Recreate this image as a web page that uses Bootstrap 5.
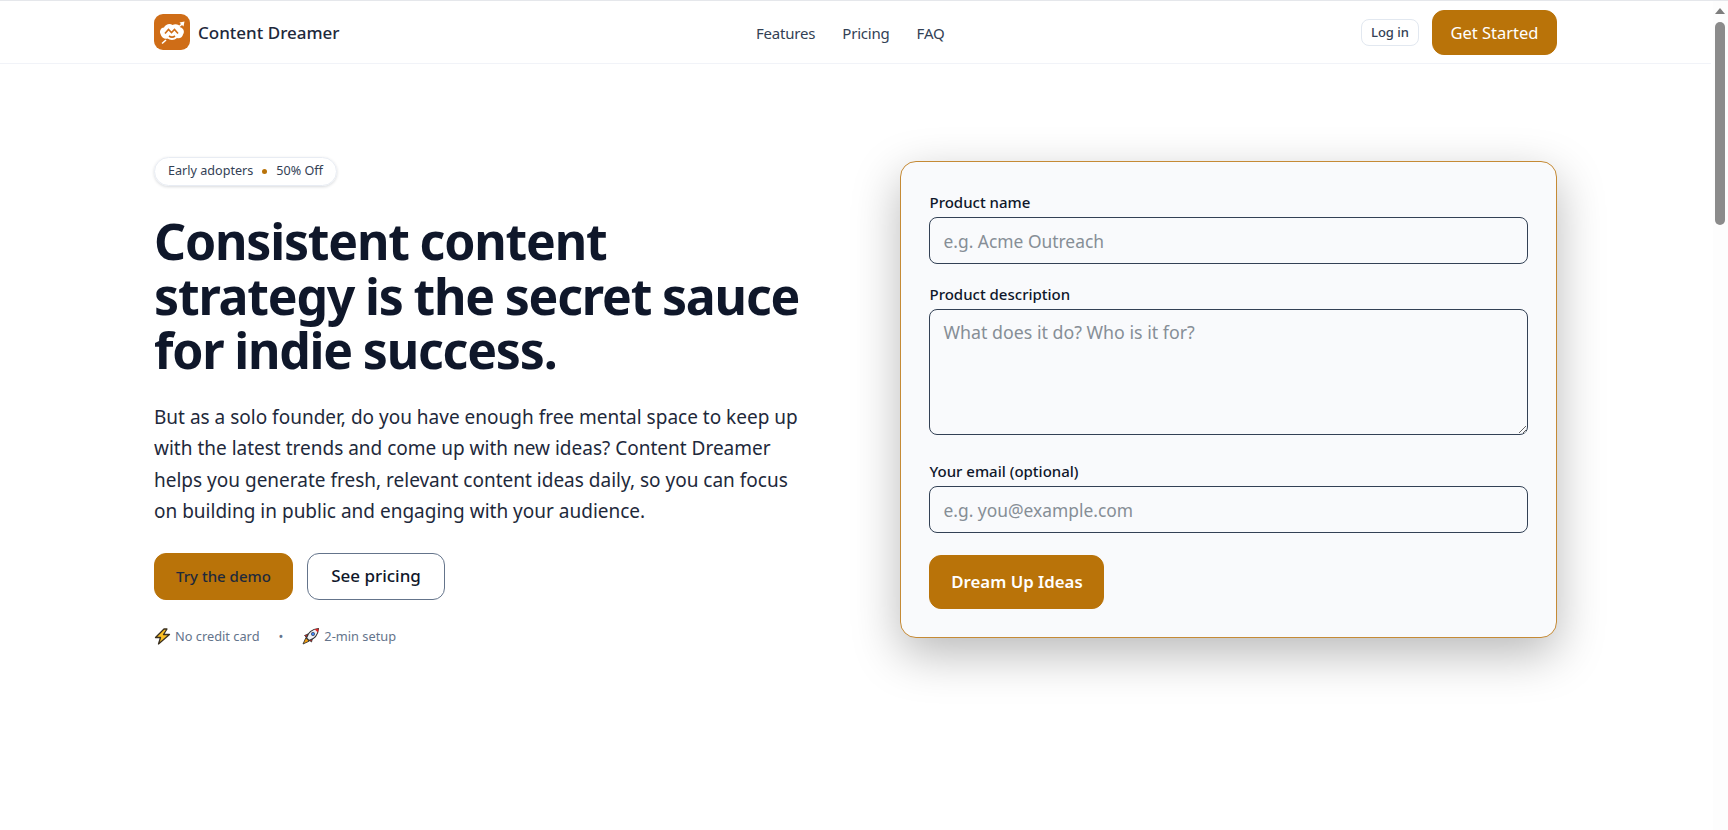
<!DOCTYPE html>
<html lang="en">

<head>
    <meta charset="UTF-8">
    <meta name="viewport" content="width=device-width, initial-scale=1.0">
    <title>Content Dreamer</title>
    <link href="https://cdn.jsdelivr.net/npm/bootstrap@5.3.2/dist/css/bootstrap.min.css" rel="stylesheet">
    <style>
        html, body {
            overflow: hidden;
        }

        body {
            font-family: "Noto Sans", "Liberation Sans", sans-serif;
            color: #0f172a;
            background: #fff;
            height: 830px;
            padding-right: 17px;
            border-top: 1px solid #e5e7eb;
        }

        .top-bar {
            height: 63px;
            border-bottom: 1px solid #f1f3f8;
        }

        .page-wrap {
            width: 1403px;
            margin: 0 auto;
        }

        .brand-name {
            font-size: 17px;
            font-weight: 500;
            color: #1e293b;
            padding-top: 1px;
        }

        .top-links {
            gap: 27px;
            font-size: 15px;
            letter-spacing: -.2px;
            color: #334155;
            padding-top: 2px;
        }

        .top-links a {
            color: inherit;
            text-decoration: none;
        }

        .btn-login {
            font-size: 13px;
            font-weight: 500;
            line-height: 1;
            width: 58px;
            height: 27px;
            padding: 1px 0 0;
            border: 1px solid #e2e8f0;
            border-radius: 8px;
            background: #fff;
            color: #334155;
        }

        .btn-amber {
            background: #b97309;
            border: 1px solid #b97309;
            color: #fff;
            border-radius: 12px;
        }

        .btn-amber:hover {
            background: #a86807;
            color: #fff;
        }

        .btn-start {
            font-size: 16.5px;
            height: 45px;
            width: 125px;
            padding: 2px 0 0;
        }

        .top-actions {
            gap: 13px;
        }

        .hero-row {
            padding-top: 93px;
            gap: 98px;
        }

        .hero-left {
            width: 649px;
        }

        .promo-pill {
            font-size: 12.6px;
            color: #334155;
            height: 29px;
            padding: 0 13px;
            border: 1px solid #e8ecf3;
            border-radius: 15px;
            box-shadow: 0 1px 3px rgba(15, 23, 42, .16);
        }

        .promo-dot {
            width: 5px;
            height: 5px;
            border-radius: 50%;
            background: #b97309;
            margin: 0 9px;
        }

        .hero-title {
            font-size: 50px;
            line-height: 54.5px;
            font-weight: 700;
            color: #0f172a;
            margin: 28px 0 24px;
            letter-spacing: -1.2px;
            word-spacing: -1px;
            white-space: nowrap;
        }

        .hero-text {
            font-size: 19px;
            line-height: 31.5px;
            color: #1e293b;
            margin-bottom: 25px;
        }

        .hero-actions {
            gap: 14px;
        }

        .btn-demo {
            width: 139px;
            height: 47px;
            padding: 0;
            color: #1e293b;
            font-size: 15px;
            font-weight: 500;
        }

        .btn-pricing {
            width: 138px;
            height: 47px;
            padding: 0;
            font-size: 17px;
            font-weight: 500;
            color: #0f172a;
            background: #fff;
            border: 1px solid #64748b;
            border-radius: 12px;
        }

        .hero-note {
            font-size: 12.8px;
            color: #64748b;
            margin-top: 27px;
        }

        .note-sep {
            margin: 0 18px 0 19px;
        }

        .form-panel {
            width: 657px;
            height: 477px;
            margin-top: 4px;
            padding: 30px 28px 28px;
            background: #f9fafc;
            border: 1px solid #c58a35;
            border-radius: 16px;
            box-shadow: 0 16px 48px rgba(0, 0, 0, .28);
        }

        .field-label {
            display: block;
            font-size: 15px;
            font-weight: 500;
            line-height: 20px;
            color: #0f172a;
            margin: 0 0 5px;
        }

        .field-box {
            display: block;
            width: 100%;
            height: 47px;
            padding: 0 13px;
            font-size: 17.4px;
            background: #f9fafc;
            border: 1px solid #334155;
            border-radius: 8px;
            color: #0f172a;
            outline: none;
            margin-bottom: 20px;
        }

        textarea.field-box {
            height: 126px;
            padding-top: 9px;
            font-size: 17.8px;
            margin-bottom: 26px;
        }

        .field-box::placeholder {
            color: #868e96;
        }

        .btn-dream {
            width: 175px;
            height: 54px;
            padding: 0;
            font-size: 16.8px;
            font-weight: 600;
            margin-top: 2px;
        }

        .fake-scroll {
            position: fixed;
            top: 1px;
            right: 0;
            width: 15px;
            height: 829px;
            background: #fdfdfd;
        }

        .fake-scroll i {
            display: block;
            margin: 7px 2px 0;
            width: 0;
            border: 5.5px solid transparent;
            border-top: 0;
            border-bottom: 6px solid #7d7d7d;
        }

        .fake-scroll b {
            display: block;
            margin: 8px 2px 0;
            width: 10px;
            height: 203px;
            border-radius: 5px;
            background: #8b8b8b;
        }
    </style>
</head>

<body>
    <header class="top-bar">
        <div class="page-wrap h-100 d-flex align-items-center justify-content-between">
            <div class="d-flex align-items-center gap-2">
                <svg width="36" height="36" viewBox="0 0 36 36">
                    <rect width="36" height="36" rx="9" fill="#cf6d17" />
                    <path d="M6.500 20c-1.500-3 .5-6.500 3.500-6.500 1.500-3.500 6-4.500 8.500-2.500 3-1.500 7-.5 8 2.500 3 .5 4.500 4.500 2.500 7-.5 3-3.500 4.500-6 3.500-2.500 2.500-7 2.500-9.500.5-3 1-6-1-7-4.500z" fill="#fff" />
                    <path d="M11 19.500l3.500-4 3 3 3-3 3.500 4M15 22c2 1.500 4 1.500 6 0" fill="none" stroke="#cf6d17" stroke-width="1.600" />
                    <path d="M25 11.500l2-1.500-1.500-1.500 5-1-1 5-1.500-1.500-1.500 1.500z" fill="#fff" />
                    <path d="M12 26l-4 3.500" stroke="#fff" stroke-width="1.600" />
                </svg>
                <span class="brand-name">Content Dreamer</span>
            </div>
            <nav class="top-links d-flex">
                <a href="#">Features</a>
                <a href="#">Pricing</a>
                <a href="#">FAQ</a>
            </nav>
            <div class="top-actions d-flex align-items-center">
                <button class="btn-login" type="button">Log in</button>
                <button class="btn btn-amber btn-start" type="button">Get Started</button>
            </div>
        </div>
    </header>

    <main class="page-wrap hero-row d-flex align-items-start">
        <section class="hero-left">
            <div class="promo-pill d-inline-flex align-items-center">Early adopters<span class="promo-dot"></span>50% Off</div>
            <h1 class="hero-title">Consistent content<br>strategy is the secret sauce<br>for indie success.</h1>
            <p class="hero-text">But as a solo founder, do you have enough free mental space to keep up with the latest trends and come up with new ideas? Content Dreamer helps you generate fresh, relevant content ideas daily, so you can focus on building in public and engaging with your audience.</p>
            <div class="hero-actions d-flex">
                <button class="btn btn-amber btn-demo" type="button">Try the demo</button>
                <button class="btn btn-pricing" type="button">See pricing</button>
            </div>
            <div class="hero-note d-flex align-items-center">
                <svg width="17" height="17" viewBox="0 0 17 17" class="me-1">
                    <path d="M10 1 1.500 9.500h5L4.500 16 15.500 6.500h-6L13 1z" fill="#fbbf24" stroke="#3a3020" stroke-width="1.300" stroke-linejoin="round" />
                </svg>
                <span>No credit card</span>
                <span class="note-sep">•</span>
                <svg width="19" height="19" viewBox="0 0 19 19" class="me-1">
                    <path d="M5 10.500 2 17l6.500-3z" fill="#f59e0b" stroke="#333" stroke-width=".9" stroke-linejoin="round" />
                    <path d="M3.500 8.500 7 7l-1 4zM10.500 15l1-3.500-4 1z" fill="#dc2626" stroke="#333" stroke-width=".8" stroke-linejoin="round" />
                    <path d="M5.500 11c1.500-5.500 6-9 12-9.500-.5 6-4 10.500-9.500 12z" fill="#eef2f7" stroke="#333" stroke-width="1.100" stroke-linejoin="round" />
                    <path d="M13.500 2.200 17.500 1.500 17 5.500z" fill="#dc2626" />
                    <circle cx="12" cy="7" r="1.700" fill="#3b82f6" stroke="#333" stroke-width=".6" />
                </svg>
                <span>2-min setup</span>
            </div>
        </section>

        <form class="form-panel">
            <label class="field-label" for="productName">Product name</label>
            <input class="field-box" id="productName" type="text" placeholder="e.g. Acme Outreach">
            <label class="field-label" for="productDesc">Product description</label>
            <textarea class="field-box" id="productDesc" placeholder="What does it do? Who is it for?"></textarea>
            <label class="field-label" for="yourEmail">Your email (optional)</label>
            <input class="field-box" id="yourEmail" type="email" placeholder="e.g. you@example.com">
            <button class="btn btn-amber btn-dream" type="button">Dream Up Ideas</button>
        </form>
    </main>

    <div class="fake-scroll"><i></i><b></b></div>

    <script src="https://cdn.jsdelivr.net/npm/bootstrap@5.3.2/dist/js/bootstrap.bundle.min.js"></script>
</body>

</html>
